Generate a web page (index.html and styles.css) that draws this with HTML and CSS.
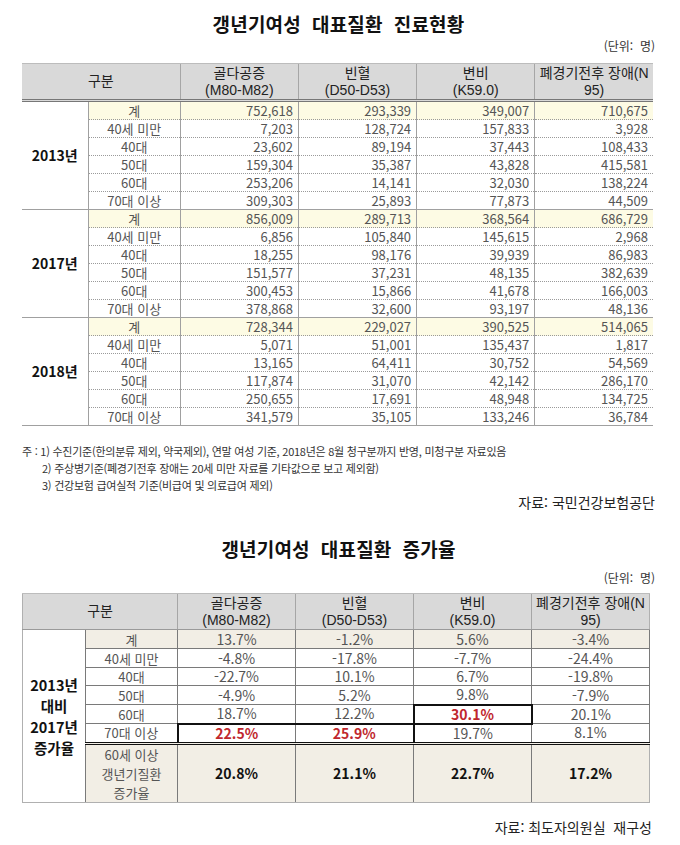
FILE: index.html
```html
<!DOCTYPE html>
<html lang="ko">
<head>
<meta charset="utf-8">
<title>갱년기여성 대표질환</title>
<link rel="stylesheet" href="styles.css">
</head>
<body>
<div class="page">
  <h1 class="title">갱년기여성&nbsp; 대표질환&nbsp; 진료현황</h1>
  <div class="unit">(단위:&nbsp; 명)</div>
  <table class="t1">
    <colgroup>
      <col class="c-year"><col class="c-cat"><col class="c-val"><col class="c-val"><col class="c-val"><col class="c-val">
    </colgroup>
    <thead>
      <tr>
        <th colspan="2">구분</th>
        <th>골다공증<br>(M80-M82)</th>
        <th>빈혈<br>(D50-D53)</th>
        <th>변비<br>(K59.0)</th>
        <th>폐경기전후 장애(N<br>95)</th>
      </tr>
    </thead>
    <tbody>
      <tr class="sum"><td class="year" rowspan="6">2013년</td><td class="cat">계</td><td>752,618</td><td>293,339</td><td>349,007</td><td>710,675</td></tr>
      <tr><td class="cat">40세 미만</td><td>7,203</td><td>128,724</td><td>157,833</td><td>3,928</td></tr>
      <tr><td class="cat">40대</td><td>23,602</td><td>89,194</td><td>37,443</td><td>108,433</td></tr>
      <tr><td class="cat">50대</td><td>159,304</td><td>35,387</td><td>43,828</td><td>415,581</td></tr>
      <tr><td class="cat">60대</td><td>253,206</td><td>14,141</td><td>32,030</td><td>138,224</td></tr>
      <tr class="last"><td class="cat">70대 이상</td><td>309,303</td><td>25,893</td><td>77,873</td><td>44,509</td></tr>
    </tbody>
    <tbody>
      <tr class="sum"><td class="year" rowspan="6">2017년</td><td class="cat">계</td><td>856,009</td><td>289,713</td><td>368,564</td><td>686,729</td></tr>
      <tr><td class="cat">40세 미만</td><td>6,856</td><td>105,840</td><td>145,615</td><td>2,968</td></tr>
      <tr><td class="cat">40대</td><td>18,255</td><td>98,176</td><td>39,939</td><td>86,983</td></tr>
      <tr><td class="cat">50대</td><td>151,577</td><td>37,231</td><td>48,135</td><td>382,639</td></tr>
      <tr><td class="cat">60대</td><td>300,453</td><td>15,866</td><td>41,678</td><td>166,003</td></tr>
      <tr class="last"><td class="cat">70대 이상</td><td>378,868</td><td>32,600</td><td>93,197</td><td>48,136</td></tr>
    </tbody>
    <tbody>
      <tr class="sum"><td class="year" rowspan="6">2018년</td><td class="cat">계</td><td>728,344</td><td>229,027</td><td>390,525</td><td>514,065</td></tr>
      <tr><td class="cat">40세 미만</td><td>5,071</td><td>51,001</td><td>135,437</td><td>1,817</td></tr>
      <tr><td class="cat">40대</td><td>13,165</td><td>64,411</td><td>30,752</td><td>54,569</td></tr>
      <tr><td class="cat">50대</td><td>117,874</td><td>31,070</td><td>42,142</td><td>286,170</td></tr>
      <tr><td class="cat">60대</td><td>250,655</td><td>17,691</td><td>48,948</td><td>134,725</td></tr>
      <tr class="last"><td class="cat">70대 이상</td><td>341,579</td><td>35,105</td><td>133,246</td><td>36,784</td></tr>
    </tbody>
  </table>

  <div class="notes">
    <p>주 : 1) 수진기준(한의분류 제외, 약국제외), 연말 여성 기준, 2018년은 8월 청구분까지 반영, 미청구분 자료있음</p>
    <p class="ind">2) 주상병기준(폐경기전후 장애는 20세 미만 자료를 기타값으로 보고 제외함)</p>
    <p class="ind">3) 건강보험 급여실적 기준(비급여 및 의료급여 제외)</p>
  </div>
  <div class="source">자료: 국민건강보험공단</div>

  <h1 class="title title2">갱년기여성&nbsp; 대표질환&nbsp; 증가율</h1>
  <div class="unit unit2">(단위:&nbsp; 명)</div>
  <table class="t2">
    <colgroup>
      <col class="c-year2"><col class="c-cat"><col class="c-val"><col class="c-val"><col class="c-val"><col class="c-val">
    </colgroup>
    <thead>
      <tr>
        <th colspan="2">구분</th>
        <th>골다공증<br>(M80-M82)</th>
        <th>빈혈<br>(D50-D53)</th>
        <th>변비<br>(K59.0)</th>
        <th>폐경기전후 장애(N<br>95)</th>
      </tr>
    </thead>
    <tbody>
      <tr class="sum r19"><td class="year" rowspan="7">2013년<br>대비<br>2017년<br>증가율</td><td class="cat">계</td><td>13.7%</td><td>-1.2%</td><td>5.6%</td><td>-3.4%</td></tr>
      <tr class="r19"><td class="cat">40세 미만</td><td>-4.8%</td><td>-17.8%</td><td>-7.7%</td><td>-24.4%</td></tr>
      <tr class="r18"><td class="cat">40대</td><td>-22.7%</td><td>10.1%</td><td>6.7%</td><td>-19.8%</td></tr>
      <tr class="r19"><td class="cat">50대</td><td>-4.9%</td><td>5.2%</td><td>9.8%</td><td>-7.9%</td></tr>
      <tr class="r19"><td class="cat">60대</td><td>18.7%</td><td>12.2%</td><td class="hl hl-one red">30.1%</td><td>20.1%</td></tr>
      <tr class="r18 dbl"><td class="cat">70대 이상</td><td class="hl hl-l red">22.5%</td><td class="hl hl-r red">25.9%</td><td>19.7%</td><td>8.1%</td></tr>
      <tr class="sum total"><td class="cat multi">60세 이상<br>갱년기질환<br>증가율</td><td class="bold">20.8%</td><td class="bold">21.1%</td><td class="bold">22.7%</td><td class="bold">17.2%</td></tr>
    </tbody>
  </table>
  <div class="source source2">자료: 최도자의원실&nbsp; 재구성</div>
</div>
</body>
</html>
```

FILE: styles.css
```css
* { box-sizing: border-box; }

html, body {
  margin: 0;
  padding: 0;
  background: #ffffff;
}

body {
  font-family: "Noto Sans CJK KR", "Noto Sans", sans-serif;
  color: #222;
  width: 680px;
}

.page {
  padding: 0 25px 0 22px;
}

.title {
  margin: 0;
  padding-top: 12px;
  font-size: 19px;
  line-height: 24px;
  font-weight: 700;
  text-align: center;
  color: #111;
  letter-spacing: 0.2px;
}

.unit {
  margin-top: 2px;
  font-size: 12px;
  line-height: 16px;
  text-align: right;
  color: #333;
}

table {
  border-collapse: collapse;
  table-layout: fixed;
  width: 631px;
}

.t1 { margin-top: 9px; }

.c-year { width: 66px; }
.c-year2 { width: 63px; }
.c-cat { width: 92px; }
.c-val { width: 118px; }

th {
  background: #d9d9d9;
  font-family: "Liberation Sans", "Noto Sans CJK KR", sans-serif;
  font-weight: 400;
  font-size: 14px;
  line-height: 17px;
  color: #222;
  padding: 0;
  border-left: 1px solid #a6a6a6;
  border-top: 1px solid #bcbcbc;
}
th:first-child { border-left: none; }

.t1 thead tr { height: 37px; }
.t1 th { border-bottom: 3px double #777; }

td {
  padding: 0;
  font-size: 13px;
  color: #555;
  white-space: nowrap;
}

.t1 td {
  height: 18px;
  line-height: 17px;
  text-align: right;
  padding-right: 5px;
  border-left: 1px solid #a0a0a0;
  border-bottom: 1px dotted #9a9a9a;
}

.t1 tbody tr.last td { border-bottom: 1px solid #a0a0a0; }

.t1 td.year {
  text-align: center;
  padding-right: 0;
  border-left: none;
  border-bottom: 1px solid #a0a0a0;
  font-size: 14px;
  font-weight: 600;
  color: #111;
}

.t1 td.cat {
  text-align: center;
  padding-right: 0;
}

.t1 tr.sum td:not(.year) { background: #fdfbe4; }

.notes {
  margin-top: 17px;
  font-size: 11px;
  line-height: 17px;
  color: #333;
  letter-spacing: -0.25px;
}
.notes p { margin: 0; }
.notes .ind { padding-left: 20px; }

.source {
  font-size: 14px;
  line-height: 16px;
  text-align: right;
  color: #222;
}

.title2 { padding-top: 0; margin-top: 27px; }
.unit2 { margin-top: 9px; }

.t2 {
  margin-top: 7px;
  width: 628px;
  border-left: 1px solid #b0b0b0;
  border-right: 1px solid #b0b0b0;
  border-bottom: 1px solid #b0b0b0;
}

.t2 thead tr { height: 36px; }
.t2 th { border-bottom: 1px solid #9a9a9a; }

.t2 td {
  text-align: center;
  font-size: 14px;
  line-height: 17px;
  border: 1px solid #7a7a7a;
}

.t2 tr.r19 td { height: 19px; }
.t2 tr.r18 td { height: 18px; }

.t2 td.year {
  font-size: 14.5px;
  line-height: 21px;
  font-weight: 600;
  color: #111;
  border-left: 1px solid #b0b0b0;
  border-top: 1px solid #9a9a9a;
  border-bottom: 1px solid #b0b0b0;
}

.t2 tr.sum td:not(.year) { background: #f2eee5; }

.t2 tr.total td {
  height: 56px;
  border-bottom: 1px solid #b0b0b0;
}
.t2 tr.total td:last-child { border-right: 1px solid #b0b0b0; }

.t2 td.multi {
  font-size: 13px;
  line-height: 19px;
}

.t2 td.cat { font-size: 13px; }

.t2 tr.dbl td:not(.year) { border-bottom: 3px double #111; }

.t2 td.bold {
  font-weight: 700;
  color: #111;
}

.red {
  color: #c0272d;
  font-weight: 700;
}

.t2 td.hl-one {
  border: 2px solid #111;
}
.t2 td.hl-l {
  border-left: 2px solid #111;
  border-top: 2px solid #111;
}
.t2 td.hl-r {
  border-right: 2px solid #111;
  border-top: 2px solid #111;
}

.source2 { margin-top: 16px; padding-right: 3px; }
```
